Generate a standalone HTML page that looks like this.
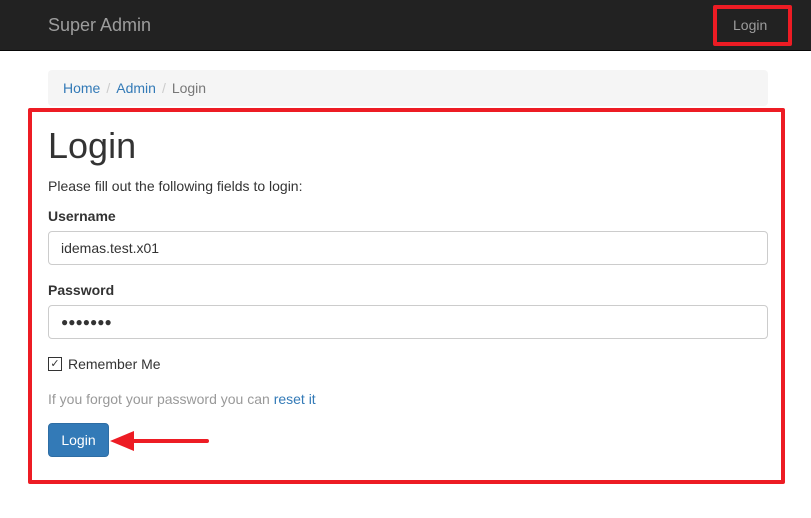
<!DOCTYPE html>
<html><head><style>
*{box-sizing:border-box;margin:0;padding:0}
body{width:811px;height:518px;background:#fff;font-family:"Liberation Sans",sans-serif;font-size:14px;color:#333;position:relative;overflow:hidden}
.nav{position:absolute;left:0;top:0;width:811px;height:51px;background:#222;border-bottom:1px solid #080808}
.brand{position:absolute;left:48px;top:15px;font-size:18px;color:#9d9d9d}
.nl{position:absolute;left:733px;top:17px;color:#9d9d9d;font-size:14px}
.r1{position:absolute;left:713px;top:5px;width:79px;height:41px;border:4px solid #ed1c24;border-radius:2px}
.bc{position:absolute;left:48px;top:70px;width:720px;height:36px;background:#f5f5f5;border-radius:4px;padding:10px 15px;font-size:14px;color:#777}
.bc a{color:#337ab7}
.bc .s{color:#ccc;padding:0 6px}
.r2{position:absolute;left:28px;top:108px;width:757px;height:376px;border:4px solid #ed1c24;border-radius:2px}
h1{position:absolute;left:48px;top:126px;font-size:36px;font-weight:500;line-height:40px}
.p{position:absolute;left:48px;top:178px}
label.b{position:absolute;left:48px;font-weight:bold}
.in{position:absolute;left:48px;width:720px;height:34px;border:1px solid #ccc;border-radius:4px;padding:8px 12px;font-size:14px}
.cb{position:absolute;left:48px;top:357px;width:14px;height:14px;border:1px solid #333;font-size:11px;line-height:12px;text-align:center}
.btn{position:absolute;left:48px;top:423px;width:61px;height:34px;background:#337ab7;border:1px solid #2e6da4;border-radius:4px;color:#fff;text-align:center;line-height:32px}
</style></head><body>
<div class="nav"><div class="brand">Super Admin</div><div class="nl">Login</div></div>
<div class="r1"></div>
<div class="bc"><a>Home</a><span class="s">/</span><a>Admin</a><span class="s">/</span>Login</div>
<div class="r2"></div>
<h1>Login</h1>
<div class="p">Please fill out the following fields to login:</div>
<label class="b" style="top:208px">Username</label>
<div class="in" style="top:231px">idemas.test.x01</div>
<label class="b" style="top:282px">Password</label>
<div class="in" style="top:305px;font-size:12px;letter-spacing:0px;padding-top:9px">●●●●●●●</div>
<div class="cb">✓</div>
<div style="position:absolute;left:68px;top:356px">Remember Me</div>
<div style="position:absolute;left:48px;top:391px;color:#999">If you forgot your password you can <span style="color:#337ab7">reset it</span></div>
<div class="btn">Login</div>
<svg style="position:absolute;left:108px;top:428px" width="104" height="26"><polygon points="2,13 26,3 26,23" fill="#ed1c24"/><line x1="22" y1="13" x2="99" y2="13" stroke="#ed1c24" stroke-width="4" stroke-linecap="round"/></svg>
</body></html>
